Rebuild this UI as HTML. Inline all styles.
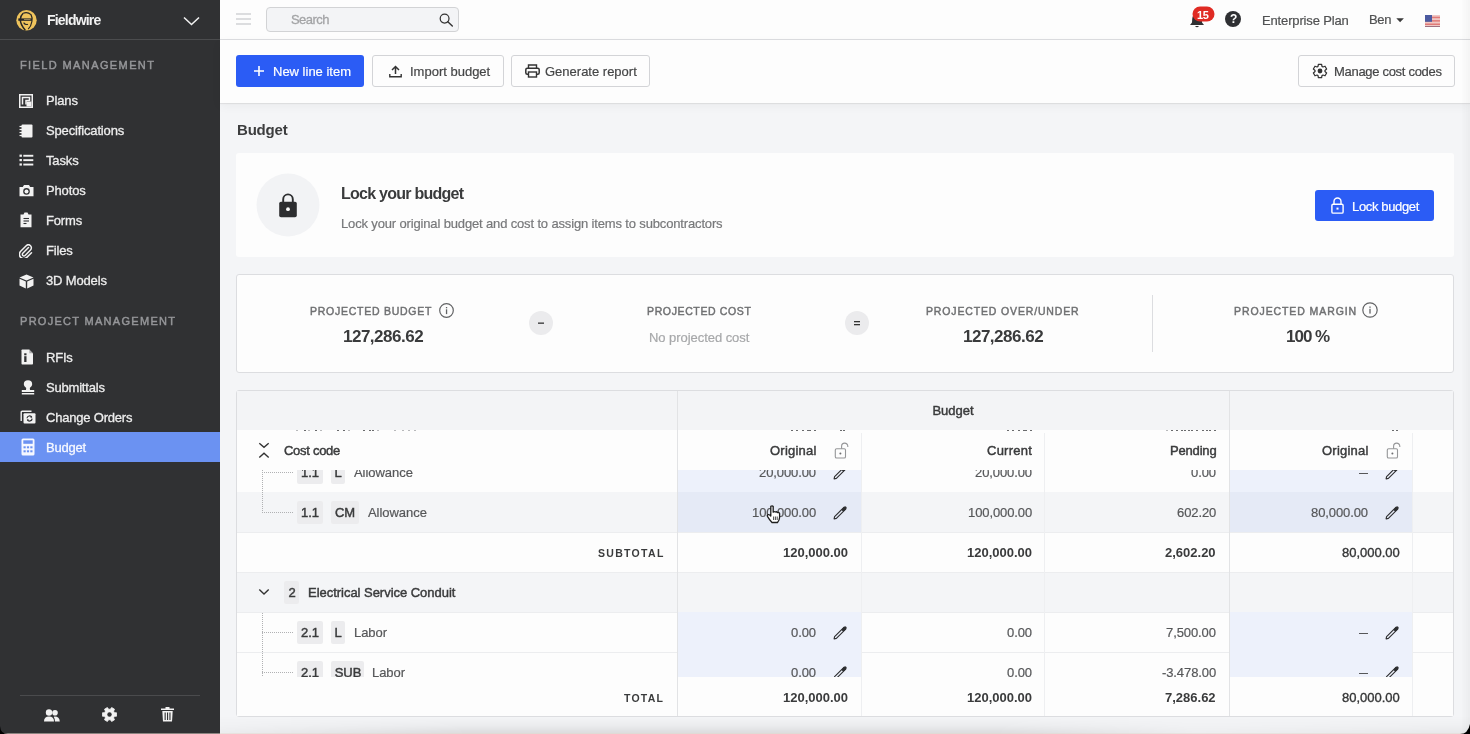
<!DOCTYPE html>
<html><head><meta charset="utf-8"><title>Fieldwire Budget</title>
<style>
html,body{margin:0;padding:0;width:1470px;height:734px;overflow:hidden;background:#f4f5f7;}
body{position:relative;font-family:"Liberation Sans",sans-serif;}
.a{position:absolute;display:block;}
.t{position:absolute;line-height:1;white-space:nowrap;will-change:transform;}
</style></head><body>

<div class="a" style="left:0px;top:0px;width:220px;height:734px;background:#303133;"></div>
<div class="a" style="left:0px;top:39px;width:220px;height:1px;background:#4b4c4e;"></div>
<svg class="a" style="left:16px;top:10px;" width="22" height="22" viewBox="0 0 22 22"><circle cx="10.5" cy="10.3" r="10.2" fill="#eec35c"/><path d="M7.2 3.2 Q4.5 5.5 4.3 9.5 Q4.3 14.5 9.3 20.2" fill="none" stroke="#262626" stroke-width="1.5"/><path d="M7.2 3.2 Q11.5 1.5 15 4.6 Q16.6 7.5 15.9 11.5 Q15.2 16 12.2 19.2" fill="none" stroke="#262626" stroke-width="1.2"/><rect x="2.3" y="8.4" width="13.6" height="2.4" fill="#262626"/><rect x="8" y="9.1" width="6.5" height="0.9" fill="#9a8a60"/><path d="M7.6 12.6 Q9.2 15.2 12 14.3" fill="none" stroke="#262626" stroke-width="1.1"/></svg>
<div class="t" style="left:47.00px;top:13.15px;font-size:14px;font-weight:700;color:#f2f2f2;letter-spacing:-0.8px;">Fieldwire</div>
<svg class="a" style="left:183px;top:16px;" width="17" height="10" viewBox="0 0 17 10"><path d="M1 1.5 L8.5 8.5 L16 1.5" fill="none" stroke="#f0f0f0" stroke-width="1.6"/></svg>
<div class="t" style="left:20.00px;top:60.39px;font-size:11px;font-weight:400;color:#96979a;letter-spacing:1.39px;-webkit-text-stroke:0.45px #96979a;">FIELD MANAGEMENT</div>
<div class="t" style="left:20.00px;top:316.19px;font-size:11px;font-weight:400;color:#96979a;letter-spacing:1.29px;-webkit-text-stroke:0.45px #96979a;">PROJECT MANAGEMENT</div>
<div class="a" style="left:0px;top:432px;width:220px;height:30px;background:#6b92f2;"></div>
<div class="t" style="left:46.00px;top:94.20px;font-size:13px;font-weight:400;color:#ededed;letter-spacing:-0.15px;-webkit-text-stroke:0.3px #ededed;">Plans</div>
<div class="t" style="left:46.00px;top:124.20px;font-size:13px;font-weight:400;color:#ededed;letter-spacing:-0.15px;-webkit-text-stroke:0.3px #ededed;">Specifications</div>
<div class="t" style="left:46.00px;top:154.20px;font-size:13px;font-weight:400;color:#ededed;letter-spacing:-0.15px;-webkit-text-stroke:0.3px #ededed;">Tasks</div>
<div class="t" style="left:46.00px;top:184.20px;font-size:13px;font-weight:400;color:#ededed;letter-spacing:-0.15px;-webkit-text-stroke:0.3px #ededed;">Photos</div>
<div class="t" style="left:46.00px;top:214.20px;font-size:13px;font-weight:400;color:#ededed;letter-spacing:-0.15px;-webkit-text-stroke:0.3px #ededed;">Forms</div>
<div class="t" style="left:46.00px;top:244.20px;font-size:13px;font-weight:400;color:#ededed;letter-spacing:-0.15px;-webkit-text-stroke:0.3px #ededed;">Files</div>
<div class="t" style="left:46.00px;top:274.20px;font-size:13px;font-weight:400;color:#ededed;letter-spacing:-0.15px;-webkit-text-stroke:0.3px #ededed;">3D Models</div>
<div class="t" style="left:46.00px;top:350.80px;font-size:13px;font-weight:400;color:#ededed;letter-spacing:-0.2px;-webkit-text-stroke:0.3px #ededed;">RFIs</div>
<div class="t" style="left:46.00px;top:380.80px;font-size:13px;font-weight:400;color:#ededed;letter-spacing:-0.2px;-webkit-text-stroke:0.3px #ededed;">Submittals</div>
<div class="t" style="left:46.00px;top:410.80px;font-size:13px;font-weight:400;color:#ededed;letter-spacing:-0.2px;-webkit-text-stroke:0.3px #ededed;">Change Orders</div>
<div class="t" style="left:46.00px;top:440.80px;font-size:13px;font-weight:400;color:#f6f8ff;letter-spacing:-0.2px;-webkit-text-stroke:0.3px #f6f8ff;">Budget</div>
<svg class="a" style="left:19px;top:94px;" width="14" height="14" viewBox="0 0 14 14"><rect x="0.75" y="0.75" width="12.5" height="12.5" fill="none" stroke="#f2f2f2" stroke-width="1.5"/><path d="M3.5 10.5 V3.5 H10.5 V6.5 H7 V10.5" fill="none" stroke="#f2f2f2" stroke-width="1.5"/><rect x="7.5" y="7.5" width="5" height="5" fill="#f2f2f2"/></svg>
<svg class="a" style="left:19px;top:124px;" width="14" height="14" viewBox="0 0 14 14"><rect x="2.5" y="0.5" width="11" height="13" rx="1" fill="#f2f2f2"/><g stroke="#f2f2f2" stroke-width="1.2"><line x1="0.5" y1="2.5" x2="3" y2="2.5"/><line x1="0.5" y1="5.5" x2="3" y2="5.5"/><line x1="0.5" y1="8.5" x2="3" y2="8.5"/><line x1="0.5" y1="11.5" x2="3" y2="11.5"/></g></svg>
<svg class="a" style="left:19px;top:154px;" width="15" height="12" viewBox="0 0 15 12"><g fill="#f2f2f2"><rect x="0.5" y="0.6" width="2.4" height="2.2"/><rect x="4.3" y="0.8" width="10" height="1.9"/><rect x="0.5" y="5" width="2.4" height="2.2"/><rect x="4.3" y="5.2" width="10" height="1.9"/><rect x="0.5" y="9.4" width="2.4" height="2.2"/><rect x="4.3" y="9.6" width="10" height="1.9"/></g></svg>
<svg class="a" style="left:19px;top:184px;" width="15" height="13" viewBox="0 0 15 13"><path d="M0.5 3 H3.8 L5 1 H10 L11.2 3 H14.5 V12.3 H0.5Z" fill="#f2f2f2"/><circle cx="7.5" cy="7.4" r="3.3" fill="#303133"/><circle cx="7.5" cy="7.4" r="2" fill="#f2f2f2"/></svg>
<svg class="a" style="left:20px;top:212px;" width="12" height="16" viewBox="0 0 12 16"><path d="M0.5 2.5 H3.5 L4.5 0.5 H7.5 L8.5 2.5 H11.5 V15.3 H0.5Z" fill="#f2f2f2"/><g stroke="#303133" stroke-width="1.1"><line x1="3.5" y1="6.5" x2="9" y2="6.5"/><line x1="3.5" y1="9" x2="9" y2="9"/><line x1="3.5" y1="11.5" x2="6.5" y2="11.5"/></g></svg>
<svg class="a" style="left:19px;top:244px;" width="14" height="14" viewBox="0 0 14 14"><path d="M9.5 3.5 L3.8 9.2 a1.6 1.6 0 0 0 2.3 2.3 L11.5 6 a3 3 0 0 0 -4.3 -4.3 L1.7 7.3 a4.3 4.3 0 0 0 6.1 6.1 L12.5 8.7" fill="none" stroke="#f2f2f2" stroke-width="1.5" stroke-linecap="round"/></svg>
<svg class="a" style="left:19px;top:274px;" width="15" height="15" viewBox="0 0 15 15"><path d="M7.5 0.5 L14.5 3.5 L7.5 6.5 L0.5 3.5Z" fill="#f2f2f2"/><path d="M0.5 4.8 L6.8 7.6 V14.5 L0.5 11.5Z" fill="#f2f2f2"/><path d="M14.5 4.8 L8.2 7.6 V14.5 L14.5 11.5Z" fill="#f2f2f2"/></svg>
<svg class="a" style="left:21px;top:348.5px;" width="13" height="16" viewBox="0 0 13 16"><path d="M0.5 1.3 Q0.5 0.5 1.3 0.5 H8.3 L12 4.2 V14.7 Q12 15.5 11.2 15.5 H1.3 Q0.5 15.5 0.5 14.7Z" fill="#f2f2f2"/><path d="M8.3 0.5 V4.2 H12" fill="#303133" opacity="0.35"/><rect x="3.2" y="7.2" width="2.3" height="5.8" fill="#303133"/><rect x="3.2" y="4.3" width="2.3" height="2" fill="#303133"/></svg>
<svg class="a" style="left:20.5px;top:379.5px;" width="14" height="15" viewBox="0 0 14 15"><path d="M7 0.3 Q11.2 0.3 11.2 4.3 Q11.2 6.8 8.8 8 L9 10 H13.2 V12 H0.8 V10 H5 L5.2 8 Q2.8 6.8 2.8 4.3 Q2.8 0.3 7 0.3Z" fill="#f2f2f2"/><rect x="0.8" y="13" width="12.4" height="1.5" fill="#f2f2f2"/></svg>
<svg class="a" style="left:19.5px;top:409.5px;" width="16" height="14" viewBox="0 0 16 14"><path d="M1.2 11 V2.2 Q1.2 1.2 2.2 1.2 H11.5" fill="none" stroke="#f2f2f2" stroke-width="1.4"/><rect x="3.5" y="3.3" width="12" height="10.2" rx="1" fill="#f2f2f2"/><path d="M7 8.3 A2.6 2.6 0 0 1 11.8 7.2" fill="none" stroke="#303133" stroke-width="1.2"/><path d="M12.1 8.6 A2.6 2.6 0 0 1 7.3 9.8" fill="none" stroke="#303133" stroke-width="1.2"/><path d="M11 5.8 L12.3 7.6 L10.4 7.8Z" fill="#303133"/><path d="M8.1 11.2 L6.8 9.4 L8.7 9.2Z" fill="#303133"/></svg>
<svg class="a" style="left:21px;top:437.5px;" width="14" height="18" viewBox="0 0 14 18"><rect x="0.5" y="0.5" width="13" height="17" rx="1.5" fill="#f6f8ff"/><rect x="2.3" y="2.3" width="9.4" height="3.5" fill="#6b92f2"/><g fill="#6b92f2"><rect x="2.5" y="8.3" width="2.2" height="2"/><rect x="5.9" y="8.3" width="2.2" height="2"/><rect x="9.3" y="8.3" width="2.2" height="2"/><rect x="2.5" y="12.3" width="2.2" height="2"/><rect x="5.9" y="12.3" width="2.2" height="2"/><rect x="9.3" y="12.3" width="2.2" height="2"/></g></svg>
<div class="a" style="left:20px;top:695px;width:180px;height:1px;background:#4a4b4d;"></div>
<svg class="a" style="left:44px;top:709px;" width="16" height="13" viewBox="0 0 16 13"><circle cx="5" cy="3.5" r="3.2" fill="#f2f2f2"/><path d="M0 12.5 Q0 7.5 5 7.5 Q10 7.5 10 12.5Z" fill="#f2f2f2"/><circle cx="11" cy="3.8" r="2.8" fill="#f2f2f2"/><path d="M10.5 7.6 Q15.5 7.5 15.8 12.5 H11 Q11 9.5 9.8 8Z" fill="#f2f2f2"/></svg>
<svg class="a" style="left:102px;top:707px;" width="15" height="15" viewBox="0 0 15 15"><path fill="#f2f2f2" stroke="#f2f2f2" stroke-width="0.8" stroke-linejoin="round" d="M12.46 5.63 L14.61 5.83 L14.61 9.17 L12.46 9.37 L11.60 10.86 L12.50 12.82 L9.61 14.49 L8.36 12.73 L6.64 12.73 L5.39 14.49 L2.50 12.82 L3.40 10.86 L2.54 9.37 L0.39 9.17 L0.39 5.83 L2.54 5.63 L3.40 4.14 L2.50 2.18 L5.39 0.51 L6.64 2.27 L8.36 2.27 L9.61 0.51 L12.50 2.18 L11.60 4.14Z"/><circle cx="7.5" cy="7.5" r="2.2" fill="#303133"/></svg>
<svg class="a" style="left:161px;top:707px;" width="13" height="15" viewBox="0 0 13 15"><rect x="0" y="1.5" width="13" height="1.5" fill="#f2f2f2"/><rect x="4.5" y="0" width="4" height="2" fill="#f2f2f2"/><path d="M1.3 4 H11.7 L11 14.5 H2Z" fill="#f2f2f2"/><g fill="#303133"><rect x="3.6" y="5.5" width="1.1" height="7.5"/><rect x="6" y="5.5" width="1.1" height="7.5"/><rect x="8.4" y="5.5" width="1.1" height="7.5"/></g></svg>
<div class="a" style="left:220px;top:0px;width:1250px;height:39px;background:#fdfdfd;"></div>
<div class="a" style="left:220px;top:39px;width:1250px;height:1px;background:#dcdde0;"></div>
<div class="a" style="left:236px;top:13.2px;width:15px;height:1.5999999999999996px;background:#dcdddf;"></div>
<div class="a" style="left:236px;top:18.3px;width:15px;height:1.6000000000000014px;background:#dcdddf;"></div>
<div class="a" style="left:236px;top:23.4px;width:15px;height:1.6000000000000014px;background:#dcdddf;"></div>
<div class="a" style="left:266px;top:7px;width:193px;height:25px;background:#f3f4f6;border:1px solid #d2d3d5;border-radius:4px;box-sizing:border-box;"></div>
<div class="t" style="left:291.00px;top:13.40px;font-size:13px;font-weight:400;color:#a3a4a6;letter-spacing:-0.55px;-webkit-text-stroke:0.3px #a3a4a6;">Search</div>
<svg class="a" style="left:439px;top:13px;" width="15" height="14" viewBox="0 0 15 14"><circle cx="5.6" cy="5.6" r="4.4" fill="none" stroke="#333" stroke-width="1.25"/><path d="M8.8 8.8 L13.3 13.1" stroke="#333" stroke-width="1.4" stroke-linecap="round"/></svg>
<svg class="a" style="left:1189px;top:12px;" width="16" height="16" viewBox="0 0 16 16"><path d="M8 1.5 Q12.5 1.8 12.8 7 L13 10.5 L15 13 H1 L3 10.5 L3.2 7 Q3.5 1.8 8 1.5Z" fill="#303133"/><path d="M6 14 Q8 16.5 10 14Z" fill="#303133"/></svg>
<svg class="a" style="left:1192px;top:6px;" width="23" height="16" viewBox="0 0 23 16"><rect x="0.5" y="0.5" width="22" height="15" rx="7.5" fill="#e02b24"/></svg>
<div class="t" style="left:1196.50px;top:9.69px;font-size:11px;font-weight:700;color:#fff;letter-spacing:-0.3px;">15</div>
<svg class="a" style="left:1225px;top:11px;" width="16" height="16" viewBox="0 0 16 16"><circle cx="8" cy="8" r="8" fill="#2f3033"/></svg>
<div class="t" style="left:1230.00px;top:12.84px;font-size:12px;font-weight:700;color:#fff;letter-spacing:0px;">?</div>
<div class="t" style="left:1262.00px;top:13.70px;font-size:13px;font-weight:400;color:#505152;letter-spacing:-0.15px;-webkit-text-stroke:0.2px #505152;">Enterprise Plan</div>
<div class="t" style="left:1369.00px;top:13.00px;font-size:13px;font-weight:400;color:#505152;letter-spacing:-0.3px;-webkit-text-stroke:0.2px #505152;">Ben</div>
<svg class="a" style="left:1396px;top:18px;" width="9" height="5" viewBox="0 0 9 5"><path d="M0.3 0.3 H7.9 L4.1 4.2Z" fill="#3a3a3a"/></svg>
<svg class="a" style="left:1425px;top:14.5px;" width="15" height="12" viewBox="0 0 15 12"><rect width="15" height="12" fill="#f0c8c4"/><g fill="#e07a78"><rect y="1.7" width="15" height="1.5"/><rect y="5.1" width="15" height="1.5"/><rect y="8.5" width="15" height="1.5"/></g><rect width="7" height="6.8" fill="#4b5aa0"/><rect y="11" width="15" height="1" fill="#a07080"/></svg>
<div class="a" style="left:220px;top:40px;width:1250px;height:63px;background:#fdfdfd;box-shadow:0 1px 1px rgba(0,0,0,0.07),0 3px 10px rgba(0,0,0,0.045);"></div>
<div class="a" style="left:236px;top:55px;width:128px;height:32px;background:#2b5cf5;border-radius:3px;"></div>
<svg class="a" style="left:254px;top:66px;" width="10" height="10" viewBox="0 0 10 10"><path d="M5 0 V10 M0 5 H10" stroke="#fff" stroke-width="1.6"/></svg>
<div class="t" style="left:273.00px;top:65.30px;font-size:13px;font-weight:400;color:#fff;letter-spacing:0px;-webkit-text-stroke:0.2px #fff;">New line item</div>
<div class="a" style="left:372px;top:55px;width:132px;height:32px;background:#fdfdfd;border:1px solid #d3d4d7;border-radius:3px;box-sizing:border-box;"></div>
<svg class="a" style="left:389px;top:65px;" width="13" height="13" viewBox="0 0 13 13"><path d="M6.5 9 V1.5 M3 5 L6.5 1.5 L10 5" fill="none" stroke="#333" stroke-width="1.5"/><path d="M0.8 9 V11.8 H12.2 V9" fill="none" stroke="#333" stroke-width="1.4"/></svg>
<div class="t" style="left:409.50px;top:65.30px;font-size:13px;font-weight:400;color:#454647;letter-spacing:0px;-webkit-text-stroke:0.2px #454647;">Import budget</div>
<div class="a" style="left:511px;top:55px;width:139px;height:32px;background:#fdfdfd;border:1px solid #d3d4d7;border-radius:3px;box-sizing:border-box;"></div>
<svg class="a" style="left:525px;top:64px;" width="15" height="14" viewBox="0 0 15 14"><path d="M3.5 4 V1 H11.5 V4" fill="none" stroke="#333" stroke-width="1.4"/><rect x="0.8" y="4.3" width="13.4" height="6" rx="1.5" fill="none" stroke="#333" stroke-width="1.5"/><rect x="3.5" y="8" width="8" height="5" fill="#fdfdfd" stroke="#333" stroke-width="1.4"/></svg>
<div class="t" style="left:545.00px;top:65.30px;font-size:13px;font-weight:400;color:#454647;letter-spacing:0px;-webkit-text-stroke:0.2px #454647;">Generate report</div>
<div class="a" style="left:1298px;top:55px;width:157px;height:32px;background:#fdfdfd;border:1px solid #d3d4d7;border-radius:3px;box-sizing:border-box;"></div>
<svg class="a" style="left:1312px;top:63px;" width="16" height="16" viewBox="0 0 16 16"><path fill="none" stroke="#333" stroke-width="1.25" stroke-linejoin="round" d="M6.01 3.41 L6.39 1.29 L9.61 1.29 L9.99 3.41 L10.98 3.99 L13.01 3.25 L14.62 6.04 L12.97 7.43 L12.97 8.57 L14.62 9.96 L13.01 12.75 L10.98 12.01 L9.99 12.59 L9.61 14.71 L6.39 14.71 L6.01 12.59 L5.02 12.01 L2.99 12.75 L1.38 9.96 L3.03 8.57 L3.03 7.43 L1.38 6.04 L2.99 3.25 L5.02 3.99Z"/><circle cx="8" cy="8" r="2.4" fill="#333"/></svg>
<div class="t" style="left:1334.20px;top:65.30px;font-size:13px;font-weight:400;color:#454647;letter-spacing:-0.3px;-webkit-text-stroke:0.2px #454647;">Manage cost codes</div>
<div class="t" style="left:236.50px;top:122.20px;font-size:15px;font-weight:700;color:#3c3d3e;letter-spacing:-0.2px;">Budget</div>
<div class="a" style="left:236px;top:153px;width:1218px;height:104px;background:#fdfdfd;border-radius:3px;"></div>
<svg class="a" style="left:256px;top:173px;" width="64" height="64" viewBox="0 0 64 64"><circle cx="32" cy="32" r="31.5" fill="#f2f3f5"/></svg>
<svg class="a" style="left:278px;top:192px;" width="20" height="26" viewBox="0 0 20 26"><path d="M5.2 10.5 V7.2 a4.8 4.8 0 0 1 9.6 0 V10.5" fill="none" stroke="#2d2e30" stroke-width="1.9"/><rect x="1.2" y="9.7" width="17.6" height="15.5" rx="1.8" fill="#2d2e30"/><circle cx="10" cy="17.2" r="1.9" fill="#fdfdfd"/></svg>
<div class="t" style="left:340.50px;top:185.66px;font-size:16px;font-weight:700;color:#3a3b3c;letter-spacing:-0.75px;">Lock your budget</div>
<div class="t" style="left:340.50px;top:217.10px;font-size:13px;font-weight:400;color:#77787a;letter-spacing:-0.15px;-webkit-text-stroke:0.2px #77787a;">Lock your original budget and cost to assign items to subcontractors</div>
<div class="a" style="left:1315px;top:190px;width:119px;height:31px;background:#2b5cf5;border-radius:3px;"></div>
<svg class="a" style="left:1331px;top:197px;" width="13" height="17" viewBox="0 0 13 17"><path d="M3 7.5 V4.5 a3.5 3.5 0 0 1 7 0 V7.5" fill="none" stroke="#fff" stroke-width="1.4"/><rect x="0.9" y="7.3" width="11.2" height="8.8" rx="1.2" fill="none" stroke="#fff" stroke-width="1.4"/><rect x="5.5" y="10.6" width="2" height="2" fill="#fff"/></svg>
<div class="t" style="left:1352.00px;top:200.00px;font-size:13px;font-weight:400;color:#fff;letter-spacing:-0.35px;-webkit-text-stroke:0.2px #fff;">Lock budget</div>
<div class="a" style="left:236px;top:274px;width:1218px;height:99px;background:#fdfdfd;border:1px solid #dcdde0;border-radius:3px;box-sizing:border-box;"></div>
<div class="t" style="left:310.00px;top:306.11px;font-size:10.5px;font-weight:400;color:#6f7072;letter-spacing:0.74px;-webkit-text-stroke:0.45px #6f7072;">PROJECTED BUDGET</div>
<svg class="a" style="left:439px;top:303px;" width="15" height="15" viewBox="0 0 15 15"><circle cx="7.5" cy="7.5" r="6.8" fill="none" stroke="#626365" stroke-width="1.2"/><rect x="6.9" y="6.3" width="1.3" height="4.8" fill="#626365"/><rect x="6.9" y="4" width="1.3" height="1.3" fill="#626365"/></svg>
<div class="t" style="left:343.00px;top:328.01px;font-size:17px;font-weight:700;color:#3a3b3c;letter-spacing:-0.5px;">127,286.62</div>
<svg class="a" style="left:529px;top:311px;" width="24" height="24" viewBox="0 0 24 24"><circle cx="12" cy="12" r="12" fill="#ebebed"/><rect x="9" y="11.5" width="6" height="1.3" fill="#333"/></svg>
<div class="t" style="left:646.50px;top:306.11px;font-size:10.5px;font-weight:400;color:#6f7072;letter-spacing:0.63px;-webkit-text-stroke:0.45px #6f7072;">PROJECTED COST</div>
<div class="t" style="left:649.00px;top:330.80px;font-size:13px;font-weight:400;color:#a7a8aa;letter-spacing:-0.05px;-webkit-text-stroke:0.2px #a7a8aa;">No projected cost</div>
<svg class="a" style="left:845px;top:311px;" width="24" height="24" viewBox="0 0 24 24"><circle cx="12" cy="12" r="12" fill="#ebebed"/><rect x="9" y="10" width="6" height="1.3" fill="#333"/><rect x="9" y="13" width="6" height="1.3" fill="#333"/></svg>
<div class="t" style="left:925.70px;top:306.11px;font-size:10.5px;font-weight:400;color:#6f7072;letter-spacing:0.85px;-webkit-text-stroke:0.45px #6f7072;">PROJECTED OVER/UNDER</div>
<div class="t" style="left:963.00px;top:328.01px;font-size:17px;font-weight:700;color:#3a3b3c;letter-spacing:-0.5px;">127,286.62</div>
<div class="a" style="left:1152px;top:295px;width:1px;height:57px;background:#dcdde0;"></div>
<div class="t" style="left:1233.50px;top:306.11px;font-size:10.5px;font-weight:400;color:#6f7072;letter-spacing:0.91px;-webkit-text-stroke:0.45px #6f7072;">PROJECTED MARGIN</div>
<svg class="a" style="left:1362px;top:302px;" width="16" height="16" viewBox="0 0 16 16"><circle cx="8" cy="8" r="7.2" fill="none" stroke="#626365" stroke-width="1.2"/><rect x="7.35" y="6.8" width="1.3" height="4.8" fill="#626365"/><rect x="7.35" y="4.5" width="1.3" height="1.3" fill="#626365"/></svg>
<div class="t" style="left:1286.00px;top:328.01px;font-size:17px;font-weight:700;color:#3a3b3c;letter-spacing:-1px;">100 %</div>
<div class="a" style="left:236px;top:390px;width:1218px;height:327px;background:#fdfdfd;border:1px solid #dcdde0;border-radius:3px;box-sizing:border-box;"></div>
<div class="a" style="left:237px;top:391px;width:1216px;height:39px;background:#f3f4f6;"></div>
<div class="t" style="left:653.00px;width:600px;top:404.00px;font-size:13px;font-weight:400;color:#3a3b3c;letter-spacing:0px;text-align:center;-webkit-text-stroke:0.45px #3a3b3c;">Budget</div>
<div class="a" style="left:304px;top:430px;width:2px;height:1px;background:#6a6b6d;"></div>
<div class="a" style="left:315px;top:430px;width:2px;height:1px;background:#6a6b6d;"></div>
<div class="a" style="left:337px;top:430px;width:2px;height:1px;background:#6a6b6d;"></div>
<div class="a" style="left:343px;top:430px;width:2px;height:1px;background:#6a6b6d;"></div>
<div class="a" style="left:363px;top:430px;width:2px;height:1px;background:#6a6b6d;"></div>
<div class="a" style="left:369px;top:430px;width:2px;height:1px;background:#6a6b6d;"></div>
<div class="a" style="left:372px;top:430px;width:2px;height:1px;background:#6a6b6d;"></div>
<div class="a" style="left:791px;top:430px;width:2px;height:1px;background:#6a6b6d;"></div>
<div class="a" style="left:796px;top:430px;width:2px;height:1px;background:#6a6b6d;"></div>
<div class="a" style="left:802px;top:430px;width:2px;height:1px;background:#6a6b6d;"></div>
<div class="a" style="left:807px;top:430px;width:2px;height:1px;background:#6a6b6d;"></div>
<div class="a" style="left:809px;top:430px;width:2px;height:1px;background:#6a6b6d;"></div>
<div class="a" style="left:814px;top:430px;width:2px;height:1px;background:#6a6b6d;"></div>
<div class="a" style="left:840px;top:430px;width:2px;height:1px;background:#6a6b6d;"></div>
<div class="a" style="left:843px;top:430px;width:2px;height:1px;background:#6a6b6d;"></div>
<div class="a" style="left:1007px;top:430px;width:2px;height:1px;background:#6a6b6d;"></div>
<div class="a" style="left:1012px;top:430px;width:2px;height:1px;background:#6a6b6d;"></div>
<div class="a" style="left:1018px;top:430px;width:2px;height:1px;background:#6a6b6d;"></div>
<div class="a" style="left:1023px;top:430px;width:2px;height:1px;background:#6a6b6d;"></div>
<div class="a" style="left:1025px;top:430px;width:2px;height:1px;background:#6a6b6d;"></div>
<div class="a" style="left:1030px;top:430px;width:2px;height:1px;background:#6a6b6d;"></div>
<div class="a" style="left:1171px;top:430px;width:2px;height:1px;background:#6a6b6d;"></div>
<div class="a" style="left:1176px;top:430px;width:2px;height:1px;background:#6a6b6d;"></div>
<div class="a" style="left:1181px;top:430px;width:2px;height:1px;background:#6a6b6d;"></div>
<div class="a" style="left:1184px;top:430px;width:2px;height:1px;background:#6a6b6d;"></div>
<div class="a" style="left:1188px;top:430px;width:2px;height:1px;background:#6a6b6d;"></div>
<div class="a" style="left:1191px;top:430px;width:2px;height:1px;background:#6a6b6d;"></div>
<div class="a" style="left:1196px;top:430px;width:2px;height:1px;background:#6a6b6d;"></div>
<div class="a" style="left:1202px;top:430px;width:2px;height:1px;background:#6a6b6d;"></div>
<div class="a" style="left:1206px;top:430px;width:2px;height:1px;background:#6a6b6d;"></div>
<div class="a" style="left:1209px;top:430px;width:2px;height:1px;background:#6a6b6d;"></div>
<div class="a" style="left:1214px;top:430px;width:2px;height:1px;background:#6a6b6d;"></div>
<div class="a" style="left:1392px;top:430px;width:2px;height:1px;background:#6a6b6d;"></div>
<div class="a" style="left:1396px;top:430px;width:2px;height:1px;background:#6a6b6d;"></div>
<div class="a" style="left:296px;top:430px;width:2px;height:1px;background:#b8b9bb;"></div>
<div class="a" style="left:308px;top:430px;width:2px;height:1px;background:#b8b9bb;"></div>
<div class="a" style="left:320px;top:430px;width:2px;height:1px;background:#b8b9bb;"></div>
<div class="a" style="left:348px;top:430px;width:2px;height:1px;background:#b8b9bb;"></div>
<div class="a" style="left:377px;top:430px;width:2px;height:1px;background:#b8b9bb;"></div>
<div class="a" style="left:394px;top:430px;width:2px;height:1px;background:#b8b9bb;"></div>
<div class="a" style="left:402px;top:430px;width:2px;height:1px;background:#b8b9bb;"></div>
<div class="a" style="left:408px;top:430px;width:2px;height:1px;background:#b8b9bb;"></div>
<div class="a" style="left:414px;top:430px;width:2px;height:1px;background:#b8b9bb;"></div>
<div class="a" style="left:1166px;top:430px;width:2px;height:1px;background:#b8b9bb;"></div>
<div class="a" style="left:677px;top:452px;width:184px;height:40px;background:#edf1fb;"></div>
<div class="a" style="left:1229px;top:452px;width:184px;height:40px;background:#edf1fb;"></div>
<div class="a" style="left:237px;top:492px;width:1216px;height:1px;background:#ecedef;"></div>
<div class="a" style="left:297px;top:461px;width:26px;height:23px;background:#ececee;border-radius:2px;"></div>
<div class="t" style="left:10.00px;width:600px;top:466.00px;font-size:13px;font-weight:400;color:#3a3b3c;letter-spacing:0px;text-align:center;-webkit-text-stroke:0.45px #3a3b3c;">1.1</div>
<div class="a" style="left:331px;top:461px;width:14px;height:23px;background:#ececee;border-radius:2px;"></div>
<div class="t" style="left:38.00px;width:600px;top:466.00px;font-size:13px;font-weight:400;color:#3a3b3c;letter-spacing:0px;text-align:center;-webkit-text-stroke:0.45px #3a3b3c;">L</div>
<div class="t" style="left:354.00px;top:466.00px;font-size:13px;font-weight:400;color:#565759;letter-spacing:-0.05px;-webkit-text-stroke:0.2px #565759;">Allowance</div>
<div class="t" style="right:654.10px;top:466.00px;font-size:13px;font-weight:400;color:#565759;letter-spacing:-0.1px;text-align:right;-webkit-text-stroke:0.2px #565759;">20,000.00</div>
<svg class="a" style="left:833px;top:465.5px;" width="14" height="14" viewBox="0 0 14 14"><path d="M1.1 12.9 L1.6 10.6 L10.9 1.3 L12.7 3.1 L3.4 12.4Z" fill="none" stroke="#2e2f31" stroke-width="1.15" stroke-linejoin="round"/><path d="M10.3 3.7 L12.1 1.9" stroke="#2e2f31" stroke-width="3" stroke-linecap="round"/></svg>
<div class="t" style="right:438.10px;top:466.00px;font-size:13px;font-weight:400;color:#565759;letter-spacing:-0.1px;text-align:right;-webkit-text-stroke:0.2px #565759;">20,000.00</div>
<div class="t" style="right:254.10px;top:466.00px;font-size:13px;font-weight:400;color:#565759;letter-spacing:-0.1px;text-align:right;-webkit-text-stroke:0.2px #565759;">0.00</div>
<div class="a" style="left:1359px;top:473px;width:9px;height:1.3000000000000114px;background:#565759;"></div>
<svg class="a" style="left:1385px;top:465.5px;" width="14" height="14" viewBox="0 0 14 14"><path d="M1.1 12.9 L1.6 10.6 L10.9 1.3 L12.7 3.1 L3.4 12.4Z" fill="none" stroke="#2e2f31" stroke-width="1.15" stroke-linejoin="round"/><path d="M10.3 3.7 L12.1 1.9" stroke="#2e2f31" stroke-width="3" stroke-linecap="round"/></svg>
<div class="a" style="left:262px;top:472px;width:32px;height:1px;background-image:linear-gradient(90deg,#b0b1b3 50%,transparent 50%);background-size:2px 1px;"></div>
<div class="a" style="left:237px;top:492px;width:1216px;height:40px;background:#f4f5f7;"></div>
<div class="a" style="left:677px;top:492px;width:184px;height:40px;background:#e5eaf6;"></div>
<div class="a" style="left:1229px;top:492px;width:184px;height:40px;background:#e5eaf6;"></div>
<div class="a" style="left:237px;top:532px;width:1216px;height:1px;background:#ecedef;"></div>
<div class="a" style="left:297px;top:501px;width:26px;height:23px;background:#ececee;border-radius:2px;"></div>
<div class="t" style="left:10.00px;width:600px;top:506.00px;font-size:13px;font-weight:400;color:#3a3b3c;letter-spacing:0px;text-align:center;-webkit-text-stroke:0.45px #3a3b3c;">1.1</div>
<div class="a" style="left:331px;top:501px;width:28px;height:23px;background:#ececee;border-radius:2px;"></div>
<div class="t" style="left:45.00px;width:600px;top:506.00px;font-size:13px;font-weight:400;color:#3a3b3c;letter-spacing:0px;text-align:center;-webkit-text-stroke:0.45px #3a3b3c;">CM</div>
<div class="t" style="left:368.00px;top:506.00px;font-size:13px;font-weight:400;color:#565759;letter-spacing:-0.05px;-webkit-text-stroke:0.2px #565759;">Allowance</div>
<div class="t" style="right:654.10px;top:506.00px;font-size:13px;font-weight:400;color:#565759;letter-spacing:-0.1px;text-align:right;-webkit-text-stroke:0.2px #565759;">100,000.00</div>
<svg class="a" style="left:833px;top:505.5px;" width="14" height="14" viewBox="0 0 14 14"><path d="M1.1 12.9 L1.6 10.6 L10.9 1.3 L12.7 3.1 L3.4 12.4Z" fill="none" stroke="#2e2f31" stroke-width="1.15" stroke-linejoin="round"/><path d="M10.3 3.7 L12.1 1.9" stroke="#2e2f31" stroke-width="3" stroke-linecap="round"/></svg>
<div class="t" style="right:438.10px;top:506.00px;font-size:13px;font-weight:400;color:#565759;letter-spacing:-0.1px;text-align:right;-webkit-text-stroke:0.2px #565759;">100,000.00</div>
<div class="t" style="right:254.10px;top:506.00px;font-size:13px;font-weight:400;color:#565759;letter-spacing:-0.1px;text-align:right;-webkit-text-stroke:0.2px #565759;">602.20</div>
<div class="t" style="right:102.10px;top:506.00px;font-size:13px;font-weight:400;color:#565759;letter-spacing:-0.1px;text-align:right;-webkit-text-stroke:0.2px #565759;">80,000.00</div>
<svg class="a" style="left:1385px;top:505.5px;" width="14" height="14" viewBox="0 0 14 14"><path d="M1.1 12.9 L1.6 10.6 L10.9 1.3 L12.7 3.1 L3.4 12.4Z" fill="none" stroke="#2e2f31" stroke-width="1.15" stroke-linejoin="round"/><path d="M10.3 3.7 L12.1 1.9" stroke="#2e2f31" stroke-width="3" stroke-linecap="round"/></svg>
<div class="a" style="left:262px;top:512px;width:32px;height:1px;background-image:linear-gradient(90deg,#b0b1b3 50%,transparent 50%);background-size:2px 1px;"></div>
<div class="a" style="left:262px;top:470px;width:1px;height:43px;background-image:linear-gradient(180deg,#b0b1b3 50%,transparent 50%);background-size:1px 2px;"></div>
<div class="a" style="left:237px;top:572px;width:1216px;height:1px;background:#ecedef;"></div>
<div class="t" style="right:805.70px;top:548.11px;font-size:10.5px;font-weight:700;color:#3a3b3c;letter-spacing:1.3px;text-align:right;">SUBTOTAL</div>
<div class="t" style="right:622.00px;top:546.00px;font-size:13px;font-weight:700;color:#3a3b3c;letter-spacing:0px;text-align:right;">120,000.00</div>
<div class="t" style="right:438.00px;top:546.00px;font-size:13px;font-weight:700;color:#3a3b3c;letter-spacing:0px;text-align:right;">120,000.00</div>
<div class="t" style="right:254.00px;top:546.00px;font-size:13px;font-weight:700;color:#3a3b3c;letter-spacing:0px;text-align:right;">2,602.20</div>
<div class="t" style="right:70.00px;top:546.00px;font-size:13px;font-weight:400;color:#343536;letter-spacing:0px;text-align:right;-webkit-text-stroke:0.35px #343536;">80,000.00</div>
<div class="a" style="left:237px;top:573px;width:1216px;height:39px;background:#f4f5f7;"></div>
<div class="a" style="left:237px;top:612px;width:1216px;height:1px;background:#ecedef;"></div>
<svg class="a" style="left:258px;top:588px;" width="12" height="8" viewBox="0 0 12 8"><path d="M1.3 1.5 L6 6 L10.7 1.5" fill="none" stroke="#333" stroke-width="1.4"/></svg>
<div class="a" style="left:284px;top:581px;width:15px;height:23px;background:#ececee;border-radius:2px;"></div>
<div class="t" style="left:-8.50px;width:600px;top:586.00px;font-size:13px;font-weight:400;color:#3a3b3c;letter-spacing:0px;text-align:center;-webkit-text-stroke:0.45px #3a3b3c;">2</div>
<div class="t" style="left:308.00px;top:586.00px;font-size:13px;font-weight:400;color:#3a3b3c;letter-spacing:-0.03px;-webkit-text-stroke:0.45px #3a3b3c;">Electrical Service Conduit</div>
<div class="a" style="left:677px;top:612px;width:184px;height:40px;background:#edf1fb;"></div>
<div class="a" style="left:1229px;top:612px;width:184px;height:40px;background:#edf1fb;"></div>
<div class="a" style="left:237px;top:652px;width:1216px;height:1px;background:#ecedef;"></div>
<div class="a" style="left:297px;top:621px;width:26px;height:23px;background:#ececee;border-radius:2px;"></div>
<div class="t" style="left:10.00px;width:600px;top:626.00px;font-size:13px;font-weight:400;color:#3a3b3c;letter-spacing:0px;text-align:center;-webkit-text-stroke:0.45px #3a3b3c;">2.1</div>
<div class="a" style="left:331px;top:621px;width:14px;height:23px;background:#ececee;border-radius:2px;"></div>
<div class="t" style="left:38.00px;width:600px;top:626.00px;font-size:13px;font-weight:400;color:#3a3b3c;letter-spacing:0px;text-align:center;-webkit-text-stroke:0.45px #3a3b3c;">L</div>
<div class="t" style="left:354.00px;top:626.00px;font-size:13px;font-weight:400;color:#565759;letter-spacing:-0.05px;-webkit-text-stroke:0.2px #565759;">Labor</div>
<div class="t" style="right:654.10px;top:626.00px;font-size:13px;font-weight:400;color:#565759;letter-spacing:-0.1px;text-align:right;-webkit-text-stroke:0.2px #565759;">0.00</div>
<svg class="a" style="left:833px;top:625.5px;" width="14" height="14" viewBox="0 0 14 14"><path d="M1.1 12.9 L1.6 10.6 L10.9 1.3 L12.7 3.1 L3.4 12.4Z" fill="none" stroke="#2e2f31" stroke-width="1.15" stroke-linejoin="round"/><path d="M10.3 3.7 L12.1 1.9" stroke="#2e2f31" stroke-width="3" stroke-linecap="round"/></svg>
<div class="t" style="right:438.10px;top:626.00px;font-size:13px;font-weight:400;color:#565759;letter-spacing:-0.1px;text-align:right;-webkit-text-stroke:0.2px #565759;">0.00</div>
<div class="t" style="right:254.10px;top:626.00px;font-size:13px;font-weight:400;color:#565759;letter-spacing:-0.1px;text-align:right;-webkit-text-stroke:0.2px #565759;">7,500.00</div>
<div class="a" style="left:1359px;top:633px;width:9px;height:1.2999999999999545px;background:#565759;"></div>
<svg class="a" style="left:1385px;top:625.5px;" width="14" height="14" viewBox="0 0 14 14"><path d="M1.1 12.9 L1.6 10.6 L10.9 1.3 L12.7 3.1 L3.4 12.4Z" fill="none" stroke="#2e2f31" stroke-width="1.15" stroke-linejoin="round"/><path d="M10.3 3.7 L12.1 1.9" stroke="#2e2f31" stroke-width="3" stroke-linecap="round"/></svg>
<div class="a" style="left:262px;top:632px;width:32px;height:1px;background-image:linear-gradient(90deg,#b0b1b3 50%,transparent 50%);background-size:2px 1px;"></div>
<div class="a" style="left:677px;top:652px;width:184px;height:40px;background:#edf1fb;"></div>
<div class="a" style="left:1229px;top:652px;width:184px;height:40px;background:#edf1fb;"></div>
<div class="a" style="left:237px;top:692px;width:1216px;height:1px;background:#ecedef;"></div>
<div class="a" style="left:297px;top:661px;width:26px;height:23px;background:#ececee;border-radius:2px;"></div>
<div class="t" style="left:10.00px;width:600px;top:666.00px;font-size:13px;font-weight:400;color:#3a3b3c;letter-spacing:0px;text-align:center;-webkit-text-stroke:0.45px #3a3b3c;">2.1</div>
<div class="a" style="left:331px;top:661px;width:33px;height:23px;background:#ececee;border-radius:2px;"></div>
<div class="t" style="left:47.50px;width:600px;top:666.00px;font-size:13px;font-weight:400;color:#3a3b3c;letter-spacing:0px;text-align:center;-webkit-text-stroke:0.45px #3a3b3c;">SUB</div>
<div class="t" style="left:372.00px;top:666.00px;font-size:13px;font-weight:400;color:#565759;letter-spacing:-0.05px;-webkit-text-stroke:0.2px #565759;">Labor</div>
<div class="t" style="right:654.10px;top:666.00px;font-size:13px;font-weight:400;color:#565759;letter-spacing:-0.1px;text-align:right;-webkit-text-stroke:0.2px #565759;">0.00</div>
<svg class="a" style="left:833px;top:665.5px;" width="14" height="14" viewBox="0 0 14 14"><path d="M1.1 12.9 L1.6 10.6 L10.9 1.3 L12.7 3.1 L3.4 12.4Z" fill="none" stroke="#2e2f31" stroke-width="1.15" stroke-linejoin="round"/><path d="M10.3 3.7 L12.1 1.9" stroke="#2e2f31" stroke-width="3" stroke-linecap="round"/></svg>
<div class="t" style="right:438.10px;top:666.00px;font-size:13px;font-weight:400;color:#565759;letter-spacing:-0.1px;text-align:right;-webkit-text-stroke:0.2px #565759;">0.00</div>
<div class="t" style="right:254.10px;top:666.00px;font-size:13px;font-weight:400;color:#565759;letter-spacing:-0.1px;text-align:right;-webkit-text-stroke:0.2px #565759;">-3.478.00</div>
<div class="a" style="left:1359px;top:673px;width:9px;height:1.2999999999999545px;background:#565759;"></div>
<svg class="a" style="left:1385px;top:665.5px;" width="14" height="14" viewBox="0 0 14 14"><path d="M1.1 12.9 L1.6 10.6 L10.9 1.3 L12.7 3.1 L3.4 12.4Z" fill="none" stroke="#2e2f31" stroke-width="1.15" stroke-linejoin="round"/><path d="M10.3 3.7 L12.1 1.9" stroke="#2e2f31" stroke-width="3" stroke-linecap="round"/></svg>
<div class="a" style="left:262px;top:672px;width:32px;height:1px;background-image:linear-gradient(90deg,#b0b1b3 50%,transparent 50%);background-size:2px 1px;"></div>
<div class="a" style="left:262px;top:613px;width:1px;height:64px;background-image:linear-gradient(180deg,#b0b1b3 50%,transparent 50%);background-size:1px 2px;"></div>
<div class="a" style="left:237px;top:431px;width:1216px;height:39px;background:#fdfdfd;"></div>
<svg class="a" style="left:258px;top:442px;" width="12" height="17" viewBox="0 0 12 17"><path d="M1.3 1.3 L6 5.3 L10.7 1.3 M1.3 15.6 L6 11.3 L10.7 15.6" fill="none" stroke="#333" stroke-width="1.4"/></svg>
<div class="t" style="left:284.40px;top:444.20px;font-size:13px;font-weight:400;color:#3a3b3c;letter-spacing:-0.28px;-webkit-text-stroke:0.45px #3a3b3c;">Cost code</div>
<div class="t" style="right:653.58px;top:444.20px;font-size:13px;font-weight:400;color:#3a3b3c;letter-spacing:0.22px;text-align:right;-webkit-text-stroke:0.45px #3a3b3c;">Original</div>
<svg class="a" style="left:834px;top:442px;" width="16" height="17" viewBox="0 0 16 17"><rect x="1.3" y="6.7" width="10.2" height="9.3" rx="1.3" fill="none" stroke="#959698" stroke-width="1.1"/><path d="M7.6 6.7 V4.2 a3.1 3.1 0 0 1 6.2 0 V4.9" fill="none" stroke="#959698" stroke-width="1.1"/><circle cx="6.4" cy="11.4" r="1" fill="#6d6e70"/></svg>
<div class="t" style="right:437.76px;top:444.20px;font-size:13px;font-weight:400;color:#3a3b3c;letter-spacing:0.24px;text-align:right;-webkit-text-stroke:0.45px #3a3b3c;">Current</div>
<div class="t" style="right:253.78px;top:444.20px;font-size:13px;font-weight:400;color:#3a3b3c;letter-spacing:-0.18px;text-align:right;-webkit-text-stroke:0.45px #3a3b3c;">Pending</div>
<div class="t" style="right:101.48px;top:444.20px;font-size:13px;font-weight:400;color:#3a3b3c;letter-spacing:0.22px;text-align:right;-webkit-text-stroke:0.45px #3a3b3c;">Original</div>
<svg class="a" style="left:1386px;top:442px;" width="16" height="17" viewBox="0 0 16 17"><rect x="1.3" y="6.7" width="10.2" height="9.3" rx="1.3" fill="none" stroke="#959698" stroke-width="1.1"/><path d="M7.6 6.7 V4.2 a3.1 3.1 0 0 1 6.2 0 V4.9" fill="none" stroke="#959698" stroke-width="1.1"/><circle cx="6.4" cy="11.4" r="1" fill="#6d6e70"/></svg>
<div class="a" style="left:237px;top:677px;width:1216px;height:39px;background:#fdfdfd;"></div>
<div class="t" style="right:806.30px;top:693.11px;font-size:10.5px;font-weight:700;color:#3a3b3c;letter-spacing:1.2px;text-align:right;">TOTAL</div>
<div class="t" style="right:622.00px;top:691.00px;font-size:13px;font-weight:700;color:#3a3b3c;letter-spacing:0px;text-align:right;">120,000.00</div>
<div class="t" style="right:438.00px;top:691.00px;font-size:13px;font-weight:700;color:#3a3b3c;letter-spacing:0px;text-align:right;">120,000.00</div>
<div class="t" style="right:254.00px;top:691.00px;font-size:13px;font-weight:700;color:#3a3b3c;letter-spacing:0px;text-align:right;">7,286.62</div>
<div class="t" style="right:70.00px;top:691.00px;font-size:13px;font-weight:400;color:#343536;letter-spacing:0px;text-align:right;-webkit-text-stroke:0.35px #343536;">80,000.00</div>
<div class="a" style="left:677px;top:391px;width:1px;height:325px;background:#e2e3e5;"></div>
<div class="a" style="left:1229px;top:391px;width:1px;height:325px;background:#e2e3e5;"></div>
<div class="a" style="left:861px;top:433px;width:1px;height:283px;background:#eeeff1;"></div>
<div class="a" style="left:1044px;top:433px;width:1px;height:283px;background:#eeeff1;"></div>
<div class="a" style="left:1412px;top:433px;width:1px;height:283px;background:#eeeff1;"></div>
<svg class="a" style="left:766px;top:505px;" width="18" height="19" viewBox="0 0 18 19"><path d="M4.8 1.3 Q6.3 0.3 7.2 1.5 V7.2 Q8.2 6.3 9.3 7 Q10.6 6.4 11.5 7.5 Q13 7.2 13.6 8.5 V12.5 Q13.4 15.5 11.5 17.5 H6 Q3.6 15 1.6 11.6 Q0.8 10 2.3 9.6 Q3.6 9.4 4.8 11 V2.2Z" fill="#fff" stroke="#1e1e1e" stroke-width="1.3" stroke-linejoin="round"/><path d="M7.6 11.5 V15 M9.4 11.5 V15 M11.2 11.5 V15" stroke="#333" stroke-width="0.9"/></svg>
<div class="a" style="left:220px;top:717px;width:1250px;height:17px;background:#f3f4f6;"></div>
<div class="a" style="left:220px;top:717px;width:1250px;height:17px;background:linear-gradient(180deg,rgba(0,0,0,0) 0%,rgba(0,0,0,0.03) 50%,rgba(0,0,0,0.10) 100%);-webkit-mask-image:linear-gradient(90deg,rgba(0,0,0,0.3) 0%,#000 20%,#000 62%,rgba(0,0,0,0.25) 78%,rgba(0,0,0,0.5) 100%);"></div>
<div class="a" style="left:0px;top:733px;width:1470px;height:1px;background:rgba(230,215,205,0.5);"></div>
<svg class="a" style="left:1460px;top:724px;" width="10" height="10" viewBox="0 0 10 10"><path d="M10 0 V10 H0 Q8 10 10 0Z" fill="#000"/></svg>
<svg class="a" style="left:0px;top:726px;" width="8" height="8" viewBox="0 0 8 8"><path d="M0 0 V8 H8 Q0.5 8 0 0Z" fill="#000"/></svg>
<div class="a" style="left:1461px;top:0px;width:9px;height:734px;background:linear-gradient(90deg,rgba(0,0,0,0) 0%,rgba(0,0,0,0.035) 100%);"></div>
</body></html>
